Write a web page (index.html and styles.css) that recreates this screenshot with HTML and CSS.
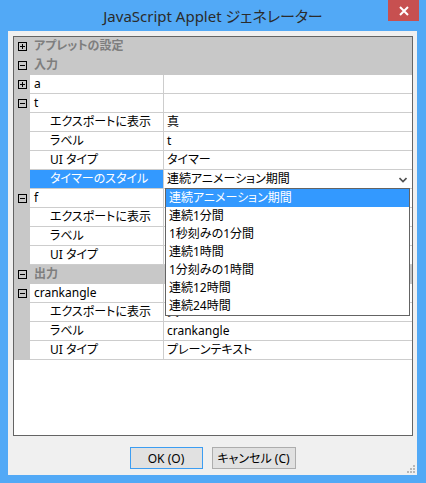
FILE: index.html
```html
<!DOCTYPE html>
<html lang="ja">
<head>
<meta charset="utf-8">
<link rel="stylesheet" href="styles.css">
</head>
<body>
<div class="window">
  <div class="titlebar">
    <div class="title">JavaScript Applet ジェネレーター</div>
    <div class="close"><svg width="10" height="10" viewBox="0 0 10 10"><path d="M1 1 L9 9 M9 1 L1 9" stroke="#fff" stroke-width="2" fill="none"/></svg></div>
  </div>
  <div class="client">
    <div class="grid">
      <div class="row cat"><div class="mg"><span class="box plus"></span></div><div class="catname">アプレットの設定</div></div>
      <div class="row cat"><div class="mg"><span class="box minus"></span></div><div class="catname">入力</div></div>
      <div class="row"><div class="mg"><span class="box plus"></span></div><div class="name">a</div><div class="value"></div></div>
      <div class="row"><div class="mg"><span class="box minus"></span></div><div class="name">t</div><div class="value"></div></div>
      <div class="row"><div class="mg"></div><div class="name child">エクスポートに表示</div><div class="value">真</div></div>
      <div class="row"><div class="mg"></div><div class="name child">ラベル</div><div class="value">t</div></div>
      <div class="row"><div class="mg"></div><div class="name child">UI タイプ</div><div class="value">タイマー</div></div>
      <div class="row"><div class="mg"></div><div class="name child sel">タイマーのスタイル</div><div class="value combo"><span>連続アニメーション期間</span><svg class="chev" width="8" height="6" viewBox="0 0 8 6"><path d="M0.5 1 L4 4.5 L7.5 1" stroke="#505050" stroke-width="1.6" fill="none"/></svg>
        <div class="list">
          <div class="item hi">連続アニメーション期間</div>
          <div class="item">連続1分間</div>
          <div class="item">1秒刻みの1分間</div>
          <div class="item">連続1時間</div>
          <div class="item">1分刻みの1時間</div>
          <div class="item">連続12時間</div>
          <div class="item">連続24時間</div>
        </div>
      </div></div>
      <div class="row"><div class="mg"><span class="box minus"></span></div><div class="name">f</div><div class="value"></div></div>
      <div class="row"><div class="mg"></div><div class="name child">エクスポートに表示</div><div class="value"></div></div>
      <div class="row"><div class="mg"></div><div class="name child">ラベル</div><div class="value"></div></div>
      <div class="row"><div class="mg"></div><div class="name child">UI タイプ</div><div class="value"></div></div>
      <div class="row cat"><div class="mg"><span class="box minus"></span></div><div class="catname">出力</div></div>
      <div class="row"><div class="mg"><span class="box minus"></span></div><div class="name">crankangle</div><div class="value"></div></div>
      <div class="row"><div class="mg"></div><div class="name child">エクスポートに表示</div><div class="value">真</div></div>
      <div class="row"><div class="mg"></div><div class="name child">ラベル</div><div class="value">crankangle</div></div>
      <div class="row"><div class="mg"></div><div class="name child">UI タイプ</div><div class="value">プレーンテキスト</div></div>
    </div>
    <div class="buttons">
      <div class="btn ok">OK (O)</div>
      <div class="btn cancel">キャンセル (C)</div>
    </div>
    <svg class="grip" width="8" height="8" viewBox="0 0 8 8">
      <rect x="6" y="0" width="2" height="2" fill="#b8b8b8"/>
      <rect x="3" y="3" width="2" height="2" fill="#b8b8b8"/>
      <rect x="6" y="3" width="2" height="2" fill="#b8b8b8"/>
      <rect x="0" y="6" width="2" height="2" fill="#b8b8b8"/>
      <rect x="3" y="6" width="2" height="2" fill="#b8b8b8"/>
      <rect x="6" y="6" width="2" height="2" fill="#b8b8b8"/>
    </svg>
  </div>
</div>
</body>
</html>
```

FILE: styles.css
```css
html, body {
  margin: 0;
  padding: 0;
}
body {
  width: 426px;
  height: 483px;
  overflow: hidden;
  font-family: "Noto Sans", "Noto Sans CJK JP", sans-serif;
  font-size: 12px;
  color: #000;
}
.window {
  width: 426px;
  height: 483px;
  background: #52a9f6;
  display: flex;
  flex-direction: column;
  box-sizing: border-box;
}
.titlebar {
  height: 31px;
  position: relative;
  display: flex;
  align-items: center;
  justify-content: center;
}
.title {
  font-family: "Noto Sans", "Noto Sans CJK JP", sans-serif;
  font-size: 15px;
  color: #2b2b2b;
  font-feature-settings: "palt";
  margin-top: -1px;
}
.close {
  position: absolute;
  top: 0;
  left: 388px;
  width: 31px;
  height: 21px;
  background: #c75050;
  display: flex;
  align-items: center;
  justify-content: center;
}
.client {
  margin: 0 9px 8px 8px;
  flex: 1;
  background: #f0f0f0;
  box-sizing: border-box;
  padding: 5px 4px 0 5px;
  display: flex;
  flex-direction: column;
  position: relative;
}
.grid {
  height: 400px;
  box-sizing: border-box;
  border: 1px solid #646464;
  background: #fff;
  display: flex;
  flex-direction: column;
}
.row {
  display: flex;
  height: 19px;
  flex: none;
  line-height: 18px;
  font-feature-settings: "palt";
}
.mg {
  width: 16px;
  flex: none;
  background: #c8c8c8;
  display: flex;
  align-items: center;
  justify-content: center;
  padding-bottom: 1px;
  box-sizing: border-box;
}
.box {
  width: 9px;
  height: 9px;
  box-sizing: border-box;
  border: 1px solid #000;
  position: relative;
}
.box::before {
  content: "";
  position: absolute;
  left: 1px;
  top: 3px;
  width: 5px;
  height: 1px;
  background: #000;
}
.box.plus::after {
  content: "";
  position: absolute;
  left: 3px;
  top: 1px;
  width: 1px;
  height: 5px;
  background: #000;
}
.cat {
  background: #c8c8c8;
}
.catname {
  padding-left: 4px;
  color: #7e7e7e;
  font-weight: bold;
  height: 18px;
}
.name {
  width: 134px;
  flex: none;
  box-sizing: border-box;
  height: 19px;
  border-bottom: 1px solid #cdcdcd;
  border-right: 1px solid #cdcdcd;
  padding-left: 4px;
  white-space: nowrap;
}
.name.child {
  padding-left: 20px;
}
.name.sel {
  background: #3399ff;
  color: #fff;
}
.value {
  flex: 1;
  height: 19px;
  box-sizing: border-box;
  border-bottom: 1px solid #cdcdcd;
  padding-left: 3px;
  white-space: nowrap;
  position: relative;
}
.combo {
  display: flex;
  align-items: center;
  justify-content: space-between;
  padding-right: 5px;
  line-height: 18px;
}
.chev {
  margin-top: 1px;
}
.list {
  position: absolute;
  left: 1px;
  top: 18px;
  width: 245px;
  box-sizing: border-box;
  border: 1px solid #646464;
  background: #fff;
  z-index: 5;
}
.item {
  height: 18px;
  line-height: 18px;
  padding-left: 3px;
}
.item.hi {
  background: #3399ff;
  color: #fff;
}
.buttons {
  display: flex;
  justify-content: center;
  gap: 9px;
  margin-top: 11px;
  padding-right: 1px;
}
.btn {
  height: 22px;
  box-sizing: border-box;
  background: #e1e1e1;
  border: 1px solid #adadad;
  display: flex;
  align-items: center;
  justify-content: center;
  font-feature-settings: "palt";
}
.btn.ok {
  width: 73px;
  border-color: #3c9df2;
}
.btn.cancel {
  width: 84px;
}
.grip {
  position: absolute;
  right: 2px;
  bottom: 2px;
}
```
